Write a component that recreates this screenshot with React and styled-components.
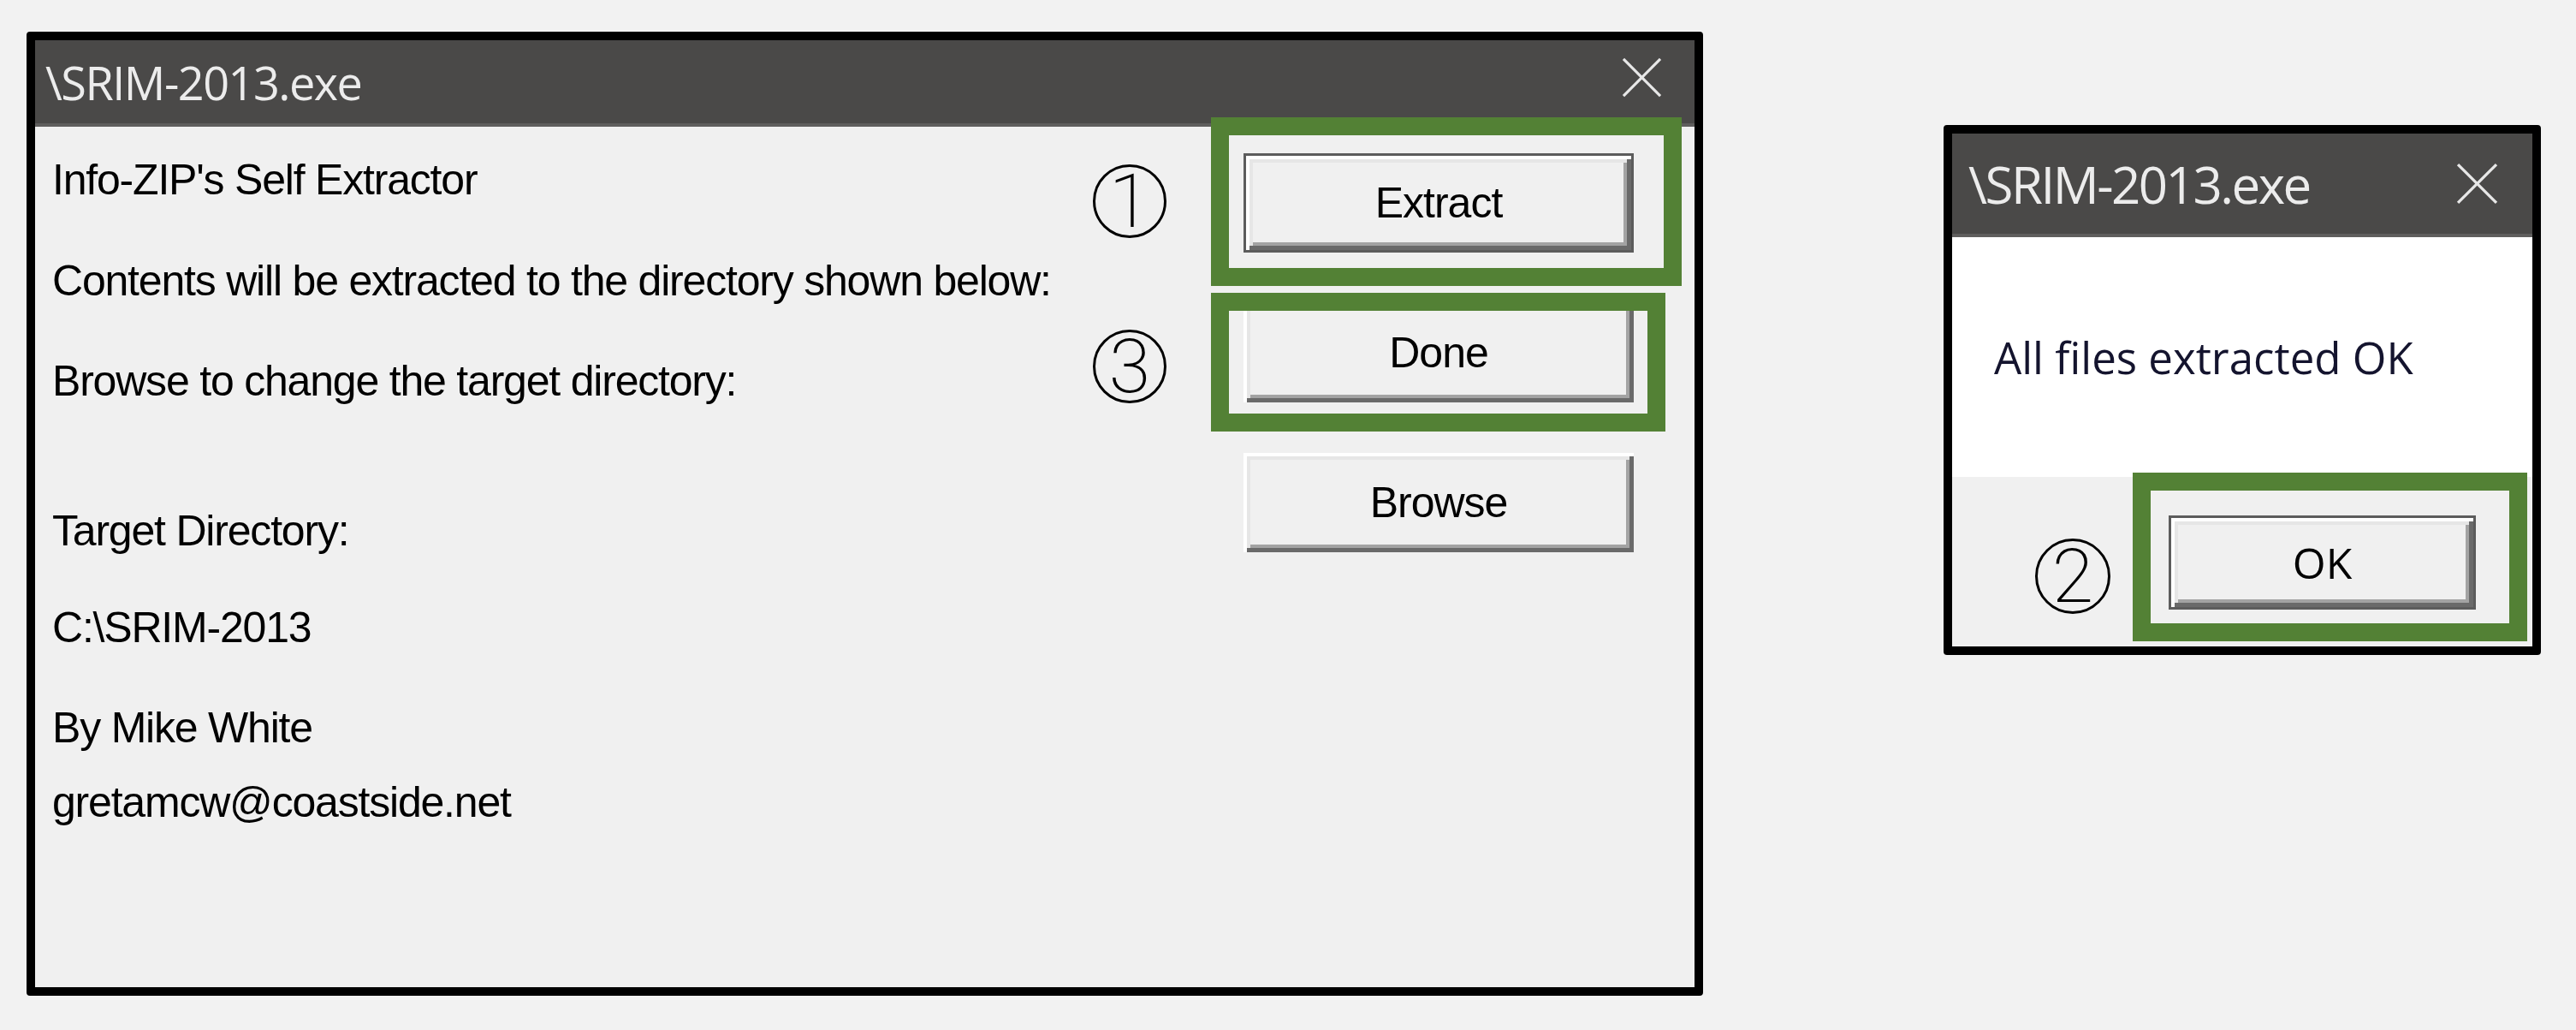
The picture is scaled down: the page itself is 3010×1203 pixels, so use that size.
import React from 'react';
import styled, { createGlobalStyle } from 'styled-components';

const GlobalStyle = createGlobalStyle`
  html, body {
    margin: 0;
    padding: 0;
    background: #f2f2f2;
    overflow: hidden;
  }
`;

const classicFont = `'Liberation Sans', Arial, sans-serif`;
const modernFont = `'Open Sans', 'Noto Sans', sans-serif`;
const annotationGreen = '#538135';

const Page = styled.div`
  display: flex;
  align-items: flex-start;
  gap: 281px;
  width: 3010px;
  height: 1203px;
  box-sizing: border-box;
  padding: 37px 0 0 31px;
`;

const Window = styled.div`
  position: relative;
  display: flex;
  flex-direction: column;
  width: ${(p) => p.$w}px;
  height: ${(p) => p.$h}px;
  margin-top: ${(p) => p.$top || 0}px;
  box-sizing: border-box;
  border: 10px solid #000;
  border-radius: 4px;
  background: #f0f0f0;
  overflow: hidden;
`;

const TitleBar = styled.div`
  display: flex;
  align-items: center;
  justify-content: space-between;
  flex: none;
  height: ${(p) => p.$h}px;
  padding: 0 ${(p) => p.$right}px 0 ${(p) => p.$left}px;
  background: #4a4948;
  border-bottom: 4px solid #5f5e5d;
`;

const Title = styled.span`
  font-family: ${modernFont};
  font-size: ${(p) => p.$size}px;
  letter-spacing: ${(p) => p.$track}px;
  color: #ececec;
  line-height: 1;
`;

const CloseButton = styled.span`
  display: flex;
  margin-bottom: ${(p) => p.$lift || 0}px;
`;

const CloseIcon = ({ size }) => (
  <svg width={size} height={size} viewBox="0 0 48 48">
    <line x1="2" y1="2" x2="46" y2="46" stroke="#e8e8e8" strokeWidth="3.2" />
    <line x1="46" y1="2" x2="2" y2="46" stroke="#e8e8e8" strokeWidth="3.2" />
  </svg>
);

/* extractor window */

const ExtractorBody = styled.div`
  display: flex;
  justify-content: space-between;
  flex: 1;
`;

const TextColumn = styled.div`
  display: flex;
  flex-direction: column;
  padding: 32px 0 0 20px;
`;

const InfoLine = styled.div`
  height: 60px;
  margin-top: ${(p) => p.$gap}px;
  font-family: ${classicFont};
  font-size: 50px;
  line-height: 60px;
  letter-spacing: -1.2px;
  color: #000;
  white-space: nowrap;
`;

const ButtonColumn = styled.div`
  display: flex;
  flex-direction: column;
  gap: 59px;
  padding: 31px 71px 0 0;
`;

const ClassicButton = styled.button`
  width: ${(p) => p.$w}px;
  height: ${(p) => p.$h}px;
  box-sizing: border-box;
  padding: 0;
  background: #f0f0f0;
  border: ${(p) => (p.$default ? '3px solid #5c5c5c' : 'none')};
  box-shadow:
    inset 4px 4px 0 #ffffff,
    inset -5px -5px 0 #6a6a6a,
    inset 8px 8px 0 #e6e6e6,
    inset -9px -9px 0 #a3a3a3;
  font-family: ${(p) => (p.$modern ? modernFont : classicFont)};
  font-size: 50px;
  letter-spacing: ${(p) => (p.$modern ? 0 : -1)}px;
  color: #000;
  line-height: 1;
  cursor: default;
`;

/* message box */

const MessageBody = styled.div`
  display: flex;
  align-items: center;
  flex: none;
  height: 280px;
  padding-left: 49px;
  background: #ffffff;
`;

const MessageText = styled.span`
  font-family: ${modernFont};
  font-size: 51px;
  color: #14142e;
`;

const MessageFooter = styled.div`
  display: flex;
  justify-content: flex-end;
  align-items: flex-start;
  flex: 1;
  padding: 45px 66px 0 0;
  background: #f0f0f0;
`;

/* annotations drawn over the screenshots */

const Highlight = styled.div`
  position: absolute;
  left: ${(p) => p.$x}px;
  top: ${(p) => p.$y}px;
  width: ${(p) => p.$w}px;
  height: ${(p) => p.$h}px;
  box-sizing: border-box;
  border: 21px solid ${annotationGreen};
  pointer-events: none;
`;

const StepMarker = styled.span`
  position: absolute;
  left: ${(p) => p.$x}px;
  top: ${(p) => p.$y}px;
  display: flex;
  align-items: center;
  justify-content: center;
  width: ${(p) => p.$size}px;
  height: ${(p) => p.$size}px;
  box-sizing: border-box;
  border: 3px solid #000;
  border-radius: 50%;
  font-family: Roboto, 'Open Sans', sans-serif;
  font-weight: 200;
  font-size: 88px;
  line-height: 1;
  color: #000;
`;

const infoLines = [
  { text: "Info-ZIP's Self Extractor", gap: 0 },
  { text: 'Contents will be extracted to the directory shown below:', gap: 58 },
  { text: 'Browse to change the target directory:', gap: 57 },
  { text: 'Target Directory:', gap: 115 },
  { text: 'C:\\SRIM-2013', gap: 53 },
  { text: 'By Mike White', gap: 57 },
  { text: 'gretamcw@coastside.net', gap: 27 },
];

const extractorButtons = [
  { label: 'Extract', primary: true },
  { label: 'Done' },
  { label: 'Browse' },
];

const ExtractorWindow = () => (
  <Window $w={1959} $h={1126}>
    <TitleBar $h={97} $left={12} $right={38}>
      <Title $size={54} $track={-1.5}>{'\\SRIM-2013.exe'}</Title>
      <CloseButton $lift={10}>
        <CloseIcon size={47} />
      </CloseButton>
    </TitleBar>
    <ExtractorBody>
      <TextColumn>
        {infoLines.map((line) => (
          <InfoLine key={line.text} $gap={line.gap}>
            {line.text}
          </InfoLine>
        ))}
      </TextColumn>
      <ButtonColumn>
        {extractorButtons.map((b) => (
          <ClassicButton key={b.label} $w={456} $h={116} $default={b.primary}>
            {b.label}
          </ClassicButton>
        ))}
      </ButtonColumn>
    </ExtractorBody>
    <StepMarker $x={1236} $y={145} $size={86}>1</StepMarker>
    <StepMarker $x={1236} $y={338} $size={86}>3</StepMarker>
    <Highlight $x={1374} $y={90} $w={550} $h={197} />
    <Highlight $x={1374} $y={295} $w={531} $h={162} />
  </Window>
);

const DoneDialog = () => (
  <Window $w={698} $h={619} $top={109}>
    <TitleBar $h={117} $left={19} $right={40}>
      <Title $size={60} $track={-2.5}>{'\\SRIM-2013.exe'}</Title>
      <CloseButton>
        <CloseIcon size={49} />
      </CloseButton>
    </TitleBar>
    <MessageBody>
      <MessageText>All files extracted OK</MessageText>
    </MessageBody>
    <MessageFooter>
      <ClassicButton $w={359} $h={110} $default $modern>
        OK
      </ClassicButton>
    </MessageFooter>
    <StepMarker $x={97} $y={473} $size={88}>2</StepMarker>
    <Highlight $x={211} $y={396} $w={461} $h={197} />
  </Window>
);

export default function App() {
  return (
    <>
      <GlobalStyle />
      <Page>
        <ExtractorWindow />
        <DoneDialog />
      </Page>
    </>
  );
}
